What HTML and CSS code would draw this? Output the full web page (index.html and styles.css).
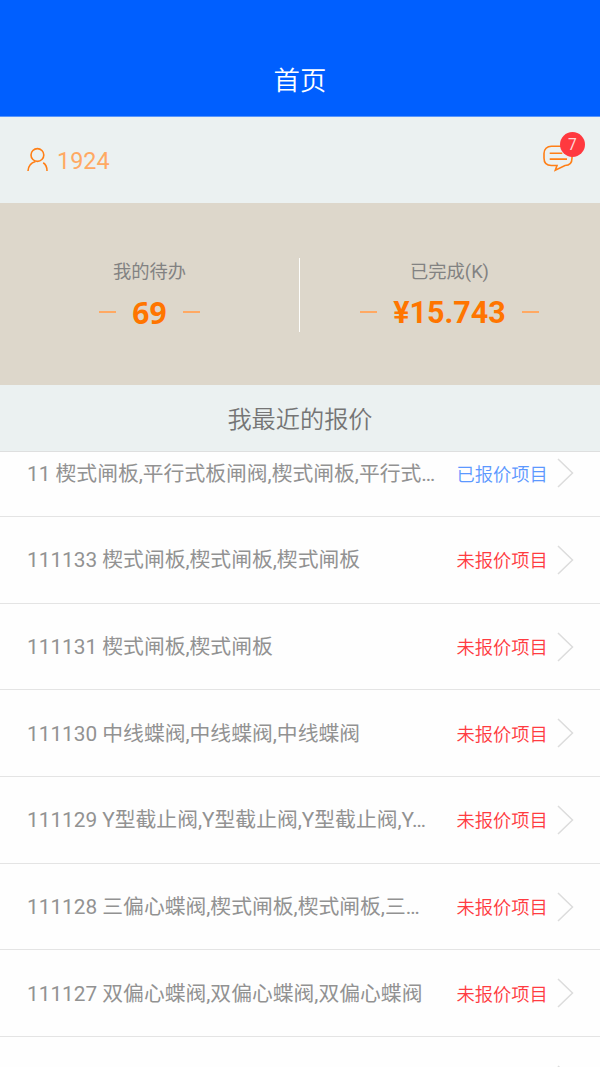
FILE: index.html
```html
<!DOCTYPE html>
<html lang="zh-CN">
<head>
<meta charset="utf-8">
<title>首页</title>
<link rel="stylesheet" href="styles.css">
</head>
<body>
<div class="app">
  <header class="header"><h1 class="header-title">首页</h1></header>
  <section class="user-bar">
    <div class="user">
      <svg class="user-icon" width="22" height="26" viewBox="0 0 22 26"><circle cx="10.4" cy="8" r="6.4"/><path d="M8.5 14.4 C4.2 15.6 1.2 18.7 1 24"/><path d="M16.2 15.8 C18.8 17.4 20 20.2 20 24"/></svg>
      <span class="user-name">1924</span>
    </div>
    <div class="messages">
      <svg class="message-icon" width="30" height="27" viewBox="0 0 30 27"><path d="M8.4 1.2 H21.6 C26 1.2 29 4.2 29 8.4 V13 C29 17.6 26.5 20.5 22 20.5 L12.3 25.2 L14 20.5 H8.4 C3.6 20.5 1 17.6 1 13 V8.4 C1 4.2 4 1.2 8.4 1.2 Z"/><path d="M6.7 8.2 H19.3 M6.7 14.1 H24"/></svg>
      <span class="badge">7</span>
    </div>
  </section>
  <section class="stats">
    <div class="stat">
      <div class="stat-label">我的待办</div>
      <div class="stat-value"><span class="number count">69</span></div>
    </div>
    <div class="stat">
      <div class="stat-label">已完成(K)</div>
      <div class="stat-value"><span class="number">¥15.743</span></div>
    </div>
  </section>
  <h2 class="section-title">我最近的报价</h2>
  <main class="list">
    <div class="rows">
      <div class="row"><span class="name">11 楔式闸板,平行式板闸阀,楔式闸板,平行式…</span><span class="status quoted">已报价项目</span><svg class="chevron" viewBox="0 0 17 30"><path d="M1 1 L15.5 15 L1 29"/></svg></div>
      <div class="row"><span class="name">111133 楔式闸板,楔式闸板,楔式闸板</span><span class="status">未报价项目</span><svg class="chevron" viewBox="0 0 17 30"><path d="M1 1 L15.5 15 L1 29"/></svg></div>
      <div class="row"><span class="name">111131 楔式闸板,楔式闸板</span><span class="status">未报价项目</span><svg class="chevron" viewBox="0 0 17 30"><path d="M1 1 L15.5 15 L1 29"/></svg></div>
      <div class="row"><span class="name">111130 中线蝶阀,中线蝶阀,中线蝶阀</span><span class="status">未报价项目</span><svg class="chevron" viewBox="0 0 17 30"><path d="M1 1 L15.5 15 L1 29"/></svg></div>
      <div class="row"><span class="name">111129 Y型截止阀,Y型截止阀,Y型截止阀,Y…</span><span class="status">未报价项目</span><svg class="chevron" viewBox="0 0 17 30"><path d="M1 1 L15.5 15 L1 29"/></svg></div>
      <div class="row"><span class="name">111128 三偏心蝶阀,楔式闸板,楔式闸板,三…</span><span class="status">未报价项目</span><svg class="chevron" viewBox="0 0 17 30"><path d="M1 1 L15.5 15 L1 29"/></svg></div>
      <div class="row"><span class="name">111127 双偏心蝶阀,双偏心蝶阀,双偏心蝶阀</span><span class="status">未报价项目</span><svg class="chevron" viewBox="0 0 17 30"><path d="M1 1 L15.5 15 L1 29"/></svg></div>
      <div class="row"><span class="name"></span><span class="status"></span><svg class="chevron" viewBox="0 0 17 30"><path d="M1 1 L15.5 15 L1 29"/></svg></div>
    </div>
  </main>
</div>
</body>
</html>
```
FILE: styles.css
```css
* { box-sizing: border-box; }
body { margin: 0; font-family: Roboto, "Noto Sans CJK SC", sans-serif; background: #fefefe; }
.app { display: flex; flex-direction: column; width: 600px; height: 1067px; overflow: hidden; }
.header { flex: none; height: 117px; padding-top: 45px; background: #005fff; border-bottom: 1px solid #5795fb; text-align: center; }
.header-title { margin: 0; font-size: 26.4px; line-height: 72px; font-weight: 350; color: #fff; }
.user-bar { flex: none; height: 86px; padding: 0 26px 0 27px; display: flex; align-items: center; justify-content: space-between; background: #ebf1f1; }
.user { display: flex; align-items: center; gap: 8px; }
.user-icon, .message-icon { display: block; fill: none; stroke: #ff7f16; stroke-width: 1.6; }
.user-name { padding-top: 2px; font-size: 23.4px; line-height: 30px; color: #ffa963; }
.messages { position: relative; }
.message-icon { margin-right: 1px; margin-top: -3px; }
.badge { position: absolute; left: 17px; top: -16px; width: 25px; height: 25px; border-radius: 50%; background: #ff393f; color: #ffd5d6; font-size: 15.6px; line-height: 26px; text-align: center; }
.stats { flex: none; height: 182px; display: flex; background: #ddd7cb; }
.stat { width: 299px; display: flex; flex-direction: column; align-items: center; padding-top: 54px; }
.stat + .stat { width: 301px; background: linear-gradient(#fdfdfb, #fdfdfb) no-repeat 0 55px / 1px 74px; }
.stat-label { font-size: 18.3px; line-height: 30px; color: #828282; }
.stat-value { display: flex; align-items: center; gap: 16.5px; height: 51px; }
.stat-value::before, .stat-value::after { content: ""; width: 17px; height: 2px; margin-top: -2px; background: #ffa963; }
.number { font-size: 30.5px; line-height: 37px; font-weight: 700; color: #ff7500; }
.count { font-family: "Noto Sans", sans-serif; font-size: 30px; line-height: 36px; }
.section-title { flex: none; margin: 0; height: 67px; border-bottom: 1px solid #dedfdf; background: #ebf1f1; text-align: center; font-size: 24.2px; line-height: 71px; font-weight: 350; color: #757575; }
.list { flex: 1; min-height: 0; overflow: hidden; }
.rows { margin-top: -21.7px; }
.row { height: 86.7px; padding: 0 26px 0 27px; display: flex; align-items: center; border-bottom: 1px solid #e4e4e4; }
.name { width: 410px; padding-top: 1px; overflow: hidden; white-space: nowrap; font-size: 20.8px; line-height: 32px; color: #929292; }
.status { width: 92px; padding-top: 3px; margin-left: 19.5px; white-space: nowrap; font-size: 18.3px; line-height: 32px; color: #ff3b41; font-weight: 350; }
.quoted { color: #5c98ff; }
.chevron { margin-left: auto; width: 17px; height: 30px; fill: none; stroke: #dcdcdc; stroke-width: 1.5; }
```
